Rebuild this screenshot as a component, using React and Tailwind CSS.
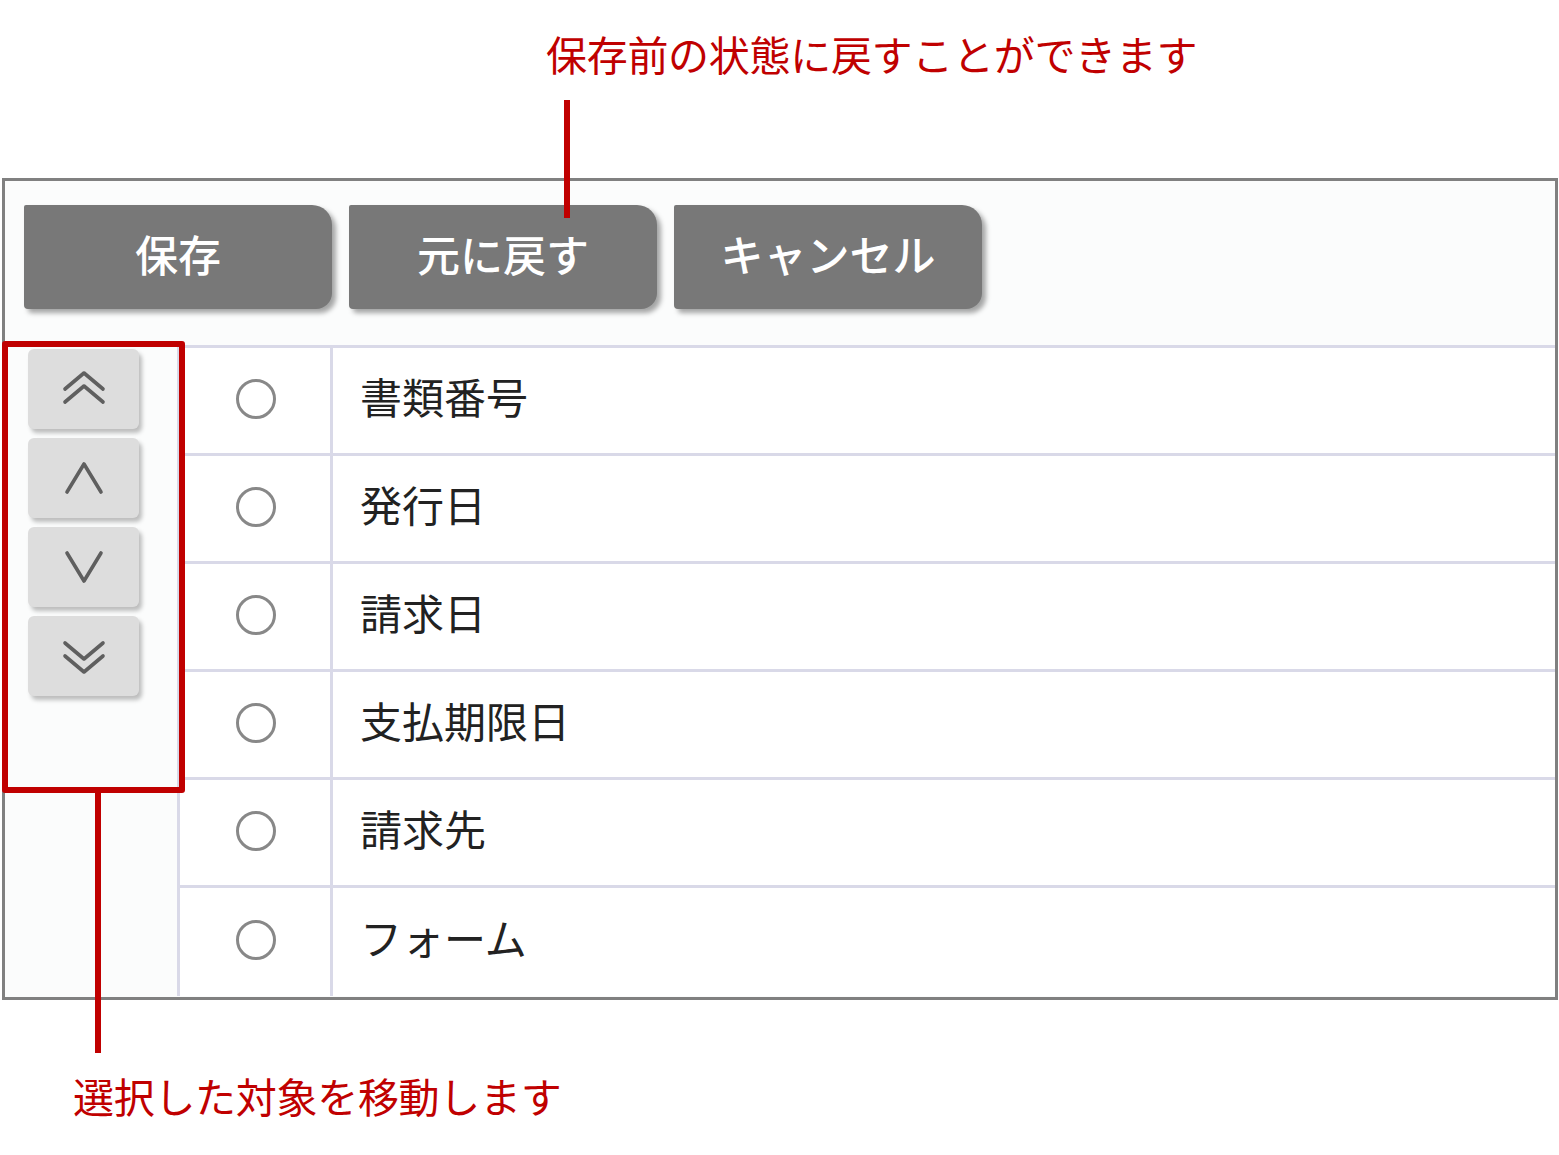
import React from "react";

const JP = { fontFamily: '"Meiryo", "Noto Sans CJK JP", sans-serif' };

function Chevron({ type }) {
  let paths = [];
  if (type === "uu") paths = ["M4 19 L23 3 L42 19", "M4 32 L23 16 L42 32"];
  if (type === "u") paths = ["M6 33 L23 5 L40 33"];
  if (type === "d") paths = ["M6 5 L23 33 L40 5"];
  if (type === "dd") paths = ["M4 6 L23 22 L42 6", "M4 19 L23 35 L42 19"];
  return (
    <svg width="46" height="38" viewBox="0 0 46 38" fill="none">
      {paths.map((d, i) => (
        <path key={i} d={d} stroke="#5f5f5f" strokeWidth="3.6" strokeLinecap="round" strokeLinejoin="round" />
      ))}
    </svg>
  );
}

const rows = ["書類番号", "発行日", "請求日", "支払期限日", "請求先", "フォーム"];

export default function App() {
  return (
    <div className="relative w-[1559px] h-[1155px] bg-white overflow-hidden" style={JP}>
      <div className="pl-[546px] pt-[26px] h-[178px] text-[41px] leading-[54px] text-[#c00000] tracking-[-0.3px]">
        保存前の状態に戻すことができます
      </div>
      <div className="ml-[2px] w-[1556px] h-[822px] border-[3px] border-[#808080] bg-[#fbfcfc] flex flex-col">
        <div className="flex gap-[17px] pl-[19px] pt-[24px]">
          {["保存", "元に戻す", "キャンセル"].map((t) => (
            <div
              key={t}
              className="w-[308px] h-[104px] bg-[#787878] rounded-tr-[20px] rounded-br-[16px] rounded-bl-[4px] rounded-tl-[2px] shadow-[4px_4px_5px_rgba(0,0,0,0.35)] flex items-center justify-center text-white text-[43px] font-medium leading-none pb-[8px]"
            >
              {t}
            </div>
          ))}
        </div>
        <div className="flex mt-[36px]">
          <div className="w-[172px] pl-[23px] pt-[4px] flex flex-col gap-[9px]">
            {["uu", "u", "d", "dd"].map((k) => (
              <div
                key={k}
                className="w-[111px] h-[80px] bg-[#dddddd] rounded-[6px] shadow-[3px_4px_4px_rgba(0,0,0,0.25)] flex items-center justify-center"
              >
                <Chevron type={k} />
              </div>
            ))}
          </div>
          <div className="flex-1 border-l-[3px] border-t-[3px] border-[#d9d9e8] bg-white">
            {rows.map((r, i) => (
              <div key={r} className={"flex h-[108px] " + (i < rows.length - 1 ? "border-b-[3px] border-[#d9d9e8]" : "")}>
                <div className="w-[153px] border-r-[3px] border-[#d9d9e8] flex items-center justify-center pb-[4px]">
                  <div className="w-[40px] h-[40px] rounded-full border-[3px] border-[#888888] ml-[2px]" />
                </div>
                <div className="flex items-center pl-[27px] text-[42px] text-[#222] leading-none pb-[10px]">
                  {r}
                </div>
              </div>
            ))}
          </div>
        </div>
      </div>
      <div className="pl-[73px] pt-[68px] text-[41px] leading-[54px] text-[#c00000] tracking-[-0.3px]">
        選択した対象を移動します
      </div>
      <div className="absolute left-[2px] top-[341px] w-[183px] h-[452px] border-[6px] border-[#c00000] rounded-[3px]" />
      <div className="absolute left-[95px] top-[791px] w-[6px] h-[262px] bg-[#c00000]" />
      <div className="absolute left-[564px] top-[100px] w-[6px] h-[118px] bg-[#c00000]" />
    </div>
  );
}
